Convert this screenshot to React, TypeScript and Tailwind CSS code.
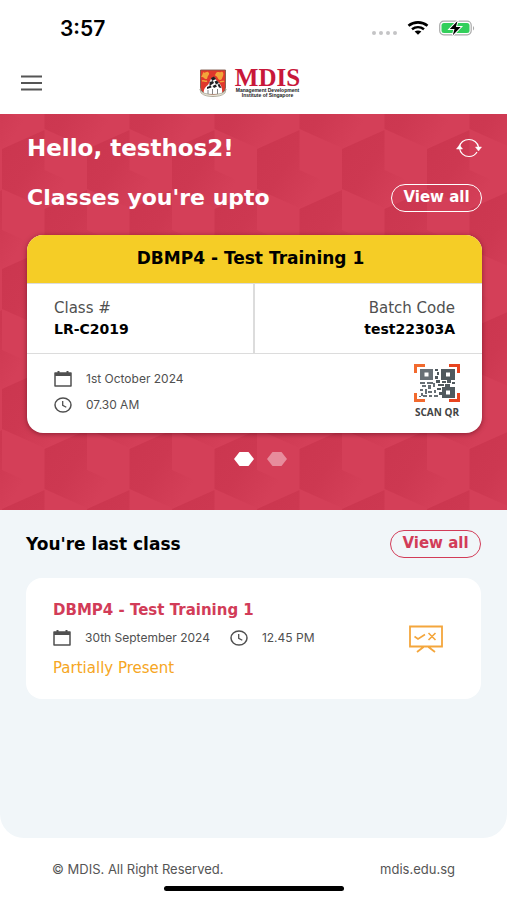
import type { ReactNode } from 'react';

function StatusBar() {
  return (
    <div className="flex h-14 items-center justify-between pr-8 pl-15">
      <span className="pt-0.5 text-[21px] leading-6 font-semibold text-black">3:57</span>
      <div className="flex items-center gap-2.5">
        <svg width="26" height="16" viewBox="0 0 26 16" fill="#c4c4c6" aria-hidden="true">
          <circle cx="3" cy="13" r="2" />
          <circle cx="10" cy="13" r="2" />
          <circle cx="17" cy="13" r="2" />
          <circle cx="24" cy="13" r="2" />
        </svg>
        <svg width="22" height="14" viewBox="0 0 22 14" aria-hidden="true">
          <path d="M1.500 4.700C7 .3 15 .3 20.500 4.700" fill="none" stroke="#000" strokeWidth="2.700" />
          <path d="M5 8.300c3.600-2.900 8.400-2.900 12 0" fill="none" stroke="#000" strokeWidth="2.500" />
          <path d="M7.600 10.600c2-1.600 4.800-1.600 6.800 0L11 13.700z" fill="#000" />
        </svg>
        <svg width="36" height="16" viewBox="0 0 36 16" aria-hidden="true">
          <rect x="0.700" y="1.200" width="31.500" height="13.600" rx="4" fill="#fff" stroke="#aaa" strokeWidth="1.200" />
          <rect x="2.500" y="2.900" width="28" height="10.200" rx="2.500" fill="#33cf5b" />
          <path d="M34 6v4.500c1.500-.8 1.500-3.700 0-4.500z" fill="#aaa" />
          <path d="M18.500 1 10.800 9h4.700l-1.700 6.300L21.700 7h-4.800z" fill="#000" stroke="#fff" strokeWidth="2" paintOrder="stroke" />
        </svg>
      </div>
    </div>
  );
}

function Crest() {
  return (
    <svg width="28" height="28" viewBox="0 0 28 28" aria-hidden="true">
      <path d="M1.500 1h25v17c0 4-3 7-12.500 9C4.500 25 1.500 22 1.500 18z" fill="#e0382b" stroke="#7d5a4c" strokeWidth="0.900" />
      <path
        d="M4 3c2 2 3-1 5 0s1 3 0 4 0 3-2 3-2-2-4-2 1-2 1-5zM17 4c2-2 3 0 5-1s3 2 2 4-1 4-3 4-2-3-4-4 0-2 0-3z"
        fill="#f2a53a"
      />
      <path d="M3 12c2-1 3 1 5 0M21 13c1-1 3 0 4-1" stroke="#f2a53a" strokeWidth="1.400" fill="none" />
      <path d="M5 25c-1-4 1-7 4-9l3-6 3-2 2 3c4 3 7 7 6 14z" fill="#fff" />
      <path d="M12 9l3-1.500L17 10l-4 2zM10.500 13l3.500-1 1 2-4.500 3zM15.500 12.500l2.500-1 2 2.500-3 1.500zM8 18l4-1.500.5 2L8 20zM13.500 17l3-1.500 1.500 2-3 1.500zM18.500 15.500l2-.5 2 4-2.500-.5z" fill="#1f1f22" />
      <path d="M9 21v4M13.500 20v5M18.500 20v5" stroke="#777" strokeWidth="0.900" />
      <path d="M1 20c1 4 5 5 13 5.500 8-.5 12-1.500 13-5.500l-1 4c-3 3-8 3.500-12 3.500S5 27 2 24z" fill="#ebe7da" stroke="#8e8b78" strokeWidth="0.600" />
    </svg>
  );
}

function Header() {
  return (
    <header className="bg-white">
      <StatusBar />
      <div className="grid h-[58px] grid-cols-[1fr_auto_1fr] items-center px-5 pb-1">
        <button type="button" aria-label="Menu" className="flex h-8 w-6 items-center">
          <svg width="23" height="16" viewBox="0 0 23 16" stroke="#555" strokeWidth="2" aria-hidden="true">
            <path d="M1 1.500h21M1 8h21M1 14.500h21" />
          </svg>
        </button>
        <div className="flex items-center gap-2 pr-2">
          <Crest />
          <div className="text-center">
            <div className="font-['Liberation_Serif',serif] text-[25px] leading-5 font-bold text-[#c8173a]">MDIS</div>
            <div className="font-['Liberation_Sans',sans-serif] text-[5px] leading-[5px] font-bold text-[#222]">
              <div>Management Development</div>
              <div>Institute of Singapore</div>
            </div>
          </div>
        </div>
      </div>
    </header>
  );
}

const FACE = '0,19 42.500,0 42.500,40 85,59 42.500,78 0,59';

function CubeBackdrop() {
  return (
    <svg className="absolute inset-0 size-full" aria-hidden="true">
      <defs>
        <linearGradient id="face" x1="0" y1="0" x2="1" y2="0.600">
          <stop offset="0" stopColor="#cb364f" />
          <stop offset="0.450" stopColor="#cd3851" />
          <stop offset="0.850" stopColor="#d43f58" />
        </linearGradient>
        <pattern id="cubes" x="2" y="16" width="85" height="120" patternUnits="userSpaceOnUse">
          <rect width="85" height="120" fill="#d43f58" />
          <polygon points={FACE} fill="url(#face)" />
          <polygon points={FACE} transform="translate(42.500 60)" fill="url(#face)" />
          <polygon points={FACE} transform="translate(-42.500 60)" fill="url(#face)" />
          <polygon points={FACE} transform="translate(42.500 -60)" fill="url(#face)" />
          <polygon points={FACE} transform="translate(-42.500 -60)" fill="url(#face)" />
        </pattern>
      </defs>
      <rect width="100%" height="100%" fill="url(#cubes)" />
    </svg>
  );
}

function ViewAll({ tone }: { tone: 'light' | 'brand' }) {
  return (
    <button
      type="button"
      className={
        tone === 'light'
          ? "h-7 w-[91px] rounded-full border border-white pb-0.5 font-['DejaVu_Sans',sans-serif] text-[15px] leading-5 font-bold text-white"
          : "h-7 w-[91px] rounded-full border border-[#d23c58] pb-0.5 font-['DejaVu_Sans',sans-serif] text-[15px] leading-5 font-bold text-[#d23c58]"
      }
    >
      View all
    </button>
  );
}

function CalendarIcon() {
  return (
    <svg width="18" height="16" viewBox="0 0 18 16" aria-hidden="true">
      <path d="M1 2h16v13H1z" fill="none" stroke="#505050" strokeWidth="1.500" strokeLinejoin="round" />
      <path d="M1 2h16v3H1zM3.500 0h2v3h-2zM12.500 0h2v3h-2z" fill="#505050" />
    </svg>
  );
}

function ClockIcon() {
  return (
    <svg width="18" height="16" viewBox="0 0 18 16" fill="none" stroke="#505050" aria-hidden="true">
      <ellipse cx="9" cy="8" rx="8" ry="7" strokeWidth="1.500" />
      <path d="M8.700 4v4.300l3.600 2" strokeWidth="1.300" />
    </svg>
  );
}

function Detail({ icon, children }: { icon: ReactNode; children: ReactNode }) {
  return (
    <div className="flex items-center gap-3.5">
      {icon}
      <span className="text-xs leading-4 text-[#505050]">{children}</span>
    </div>
  );
}

function QrIcon() {
  return (
    <svg width="46" height="38" viewBox="0 0 46 38" aria-hidden="true">
      <g fill="none" strokeWidth="3">
        <path d="M1.500 9V1.500H11M1.500 29v7.500H11" stroke="#f26a2e" />
        <path d="M35 1.500h9.500V9M35 36.500h9.500V29" stroke="#e8441f" />
      </g>
      <g fill="#687076">
        <path fillRule="evenodd" d="M6 5h13v11H6zM10.500 8.500v4h4v-4z" />
        <path d="M6 18h5v2H6zM13 18h6v2h-6zM8 21h4v2H8zM14 21h3v4h-3zM6 25h3v2H6zM11 25h2v5h-2zM7 29h2v3H7zM14 27h4v2h-4zM9 31h4v2H9zM15 31h3v2h-3zM19 19h2v4h-2zM20 26h2v3h-2zM20 31h4v2h-4zM5 32h2v1H5z" />
      </g>
      <g fill="#50595e">
        <path fillRule="evenodd" d="M27 5h14v11H27zM32 8.500v4h4v-4zM28 23h13v11H28zM32 26.500v4h4v-4z" />
        <path d="M21 5h3v2h-3zM23 8h2v3h-2zM21 12h3v3h-3zM22 16h4v3h-4zM28 17h4v2h-4zM33 16h4v3h-4zM38 18h3v2h-3zM24 20h6v2h-6zM31 20h5v3h-5zM23 24h4v2h-4zM25 28h3v3h-3z" />
      </g>
    </svg>
  );
}

function UpcomingCard() {
  return (
    <article className="overflow-hidden rounded-2xl bg-white shadow-[0_1px_5px_rgba(70,0,15,0.5)]">
      <h3 className="flex h-12 items-center justify-center bg-[#f5cd26] pr-2 pb-0.5 font-['DejaVu_Sans',sans-serif] text-[17px] leading-6 font-bold text-black">
        DBMP4 - Test Training 1
      </h3>
      <dl className="grid h-[71px] grid-cols-2 border-y border-[#dcdcdc] font-['DejaVu_Sans',sans-serif]">
        <div className="flex flex-col justify-center border-r-2 border-[#dcdcdc] pl-[27px]">
          <dt className="text-[15px] leading-[21px] text-[#505050]">Class #</dt>
          <dd className="text-sm leading-[21px] font-bold text-black">LR-C2019</dd>
        </div>
        <div className="flex flex-col justify-center pr-[27px] text-right">
          <dt className="text-[15px] leading-[21px] text-[#505050]">Batch Code</dt>
          <dd className="text-sm leading-[21px] font-bold text-black">test22303A</dd>
        </div>
      </dl>
      <div className="flex h-[79px] items-start justify-between pt-2.5 pr-[22px] pl-[27px]">
        <div className="flex flex-col gap-2.5 pt-[7px]">
          <Detail icon={<CalendarIcon />}>1st October 2024</Detail>
          <Detail icon={<ClockIcon />}>07.30 AM</Detail>
        </div>
        <button type="button" className="flex flex-col items-center gap-0.5">
          <QrIcon />
          <span className="font-['Open_Sans',sans-serif] text-[10px] leading-4 font-bold text-[#444]">SCAN QR</span>
        </button>
      </div>
    </article>
  );
}

function BoardIcon() {
  return (
    <svg width="34" height="28" viewBox="0 0 34 28" fill="none" stroke="#f4a63c" strokeWidth="1.800" aria-hidden="true">
      <path d="M1 1.500h32v20H1zM14.500 22 8 27M19.500 22l6.500 5" />
      <path d="M5.500 11.500 9 14l7-4.500M19.500 8l7 7M26.500 8l-7 7" strokeWidth="1.600" />
    </svg>
  );
}

export default function App() {
  return (
    <div className="flex min-h-screen flex-col bg-white font-['Inter',sans-serif]">
      <Header />
      <main className="flex grow flex-col">
        <section className="relative h-[396px] overflow-hidden bg-[#d43f58]">
          <CubeBackdrop />
          <div className="relative pt-[18px] pr-[25px] pl-[27px]">
            <div className="flex h-8 items-center justify-between">
              <h1 className="font-['DejaVu_Sans',sans-serif] text-[23px] leading-7 font-bold text-white">Hello, testhos2!</h1>
              <button type="button" aria-label="Refresh">
                <svg width="26" height="20" viewBox="0 0 26 20" fill="none" stroke="#fff" strokeWidth="1.200" aria-hidden="true">
                  <path d="M3.500 9C4 4.500 8 1.500 13 1.500c4.500 0 8.500 3 9.500 7.500M3.500 10c.5 5 4.500 8.500 9.500 8.500 3.500 0 6.300-1.500 8-4.500" />
                  <path d="M0.500 11 3.500 7l3 4zM19.500 9h6l-3 4z" fill="#fff" strokeWidth="0.500" />
                </svg>
              </button>
            </div>
            <div className="mt-[18px] flex h-8 items-center justify-between">
              <h2 className="font-['DejaVu_Sans',sans-serif] text-[22px] leading-7 font-bold text-white">Classes you're upto</h2>
              <ViewAll tone="light" />
            </div>
            <div className="mt-[21px]">
              <UpcomingCard />
            </div>
            <div className="mt-[19px] flex justify-center gap-[13px] pl-3">
              <button type="button" aria-label="Slide 1">
                <svg width="20" height="14" viewBox="0 0 20 14" aria-hidden="true">
                  <path d="M5.500 0h9L20 7l-5.500 7h-9L0 7z" fill="#fff" />
                </svg>
              </button>
              <button type="button" aria-label="Slide 2">
                <svg width="20" height="14" viewBox="0 0 20 14" aria-hidden="true">
                  <path d="M5.500 0h9L20 7l-5.500 7h-9L0 7z" fill="#e78c9c" />
                </svg>
              </button>
            </div>
          </div>
        </section>
        <section className="grow rounded-b-3xl bg-[#f1f6f9] px-[26px] pt-[18px]">
          <div className="flex h-8 items-center justify-between">
            <h2 className="font-['DejaVu_Sans',sans-serif] text-[17px] leading-6 font-bold text-black">You're last class</h2>
            <ViewAll tone="brand" />
          </div>
          <article className="mt-[18px] flex h-[121px] items-center justify-between rounded-2xl bg-white pr-[38px] pl-[27px]">
            <div>
              <h3 className="font-['DejaVu_Sans',sans-serif] text-[15px] leading-5 font-bold text-[#d23c58]">
                DBMP4 - Test Training 1
              </h3>
              <div className="mt-2.5 flex gap-5">
                <Detail icon={<CalendarIcon />}>30th September 2024</Detail>
                <Detail icon={<ClockIcon />}>12.45 PM</Detail>
              </div>
              <p className="mt-3 font-['DejaVu_Sans',sans-serif] text-[15px] leading-5 text-[#f6a623]">Partially Present</p>
            </div>
            <BoardIcon />
          </article>
        </section>
      </main>
      <footer className="h-[62px] px-[52px] pt-[21px]">
        <div className="flex justify-between text-[13px] leading-5 text-[#555]">
          <span>© MDIS. All Right Reserved.</span>
          <a href="#mdis">mdis.edu.sg</a>
        </div>
        <div className="mx-auto mt-[7px] h-[5px] w-[180px] rounded-full bg-black" />
      </footer>
    </div>
  );
}
